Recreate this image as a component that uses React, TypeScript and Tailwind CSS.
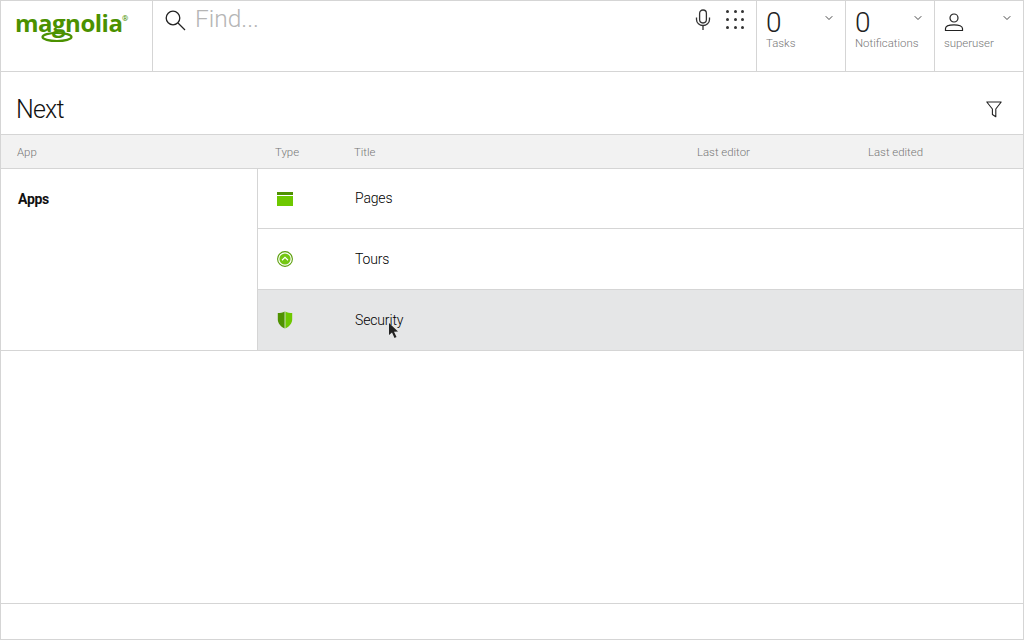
import { ChevronDown } from "lucide-react";

function StatCell({ value, label }: { value: string; label: string }) {
  return (
    <div className="relative w-[89px] shrink-0 border-l border-[#d5d5d5] pl-[9px] pt-[8px]">
      <div className="h-[28px] text-[28px] leading-[28px] font-light text-[#222]">{value}</div>
      <div className="text-[11.4px] leading-[12px] font-light text-[#777]">{label}</div>
      <ChevronDown className="absolute right-[10px] top-[11px] size-[12px] text-[#333]" strokeWidth={1.8} />
    </div>
  );
}

function AppsGrid() {
  const dots = [0, 1, 2, 3, 4, 5, 6, 7, 8];
  return (
    <div className="grid w-[18px] grid-cols-3 gap-x-[4.5px] gap-y-[5px]">
      {dots.map((d) => (
        <span key={d} className="size-[3px] rounded-full bg-[#333]" />
      ))}
    </div>
  );
}

function SearchIcon() {
  return (
    <svg width="22" height="22" viewBox="0 0 22 22" fill="none" stroke="#222" strokeWidth="1.3">
      <circle cx="8" cy="8" r="6.8" />
      <path d="M13 13 L20 20" />
    </svg>
  );
}

function MicIcon() {
  return (
    <svg width="16" height="22" viewBox="0 0 16 22" fill="none" stroke="#333" strokeWidth="1.3">
      <rect x="4.6" y="1" width="6.8" height="13" rx="3.4" />
      <path d="M1.5 8.5 V10.5 C1.5 14 4.5 16.5 8 16.5 C11.5 16.5 14.5 14 14.5 10.5 V8.5" />
      <path d="M8 16.5 V21" />
    </svg>
  );
}

function UserIcon() {
  return (
    <svg width="20" height="19" viewBox="0 0 20 19" fill="none" stroke="#222" strokeWidth="1.2">
      <circle cx="10" cy="5" r="4" />
      <path d="M1.5 17.5 V15.5 C1.5 13 5 11.8 10 11.8 C15 11.8 18.5 13 18.5 15.5 V17.5 Z" />
    </svg>
  );
}

function FilterIcon() {
  return (
    <svg width="16" height="17" viewBox="0 0 16 17" fill="none" stroke="#222" strokeWidth="1.1" strokeLinejoin="round">
      <path d="M0.8 1 H15.2 L9.8 8 V15.8 L6.4 13.5 V8 Z" />
    </svg>
  );
}

function PagesIcon() {
  return (
    <svg width="16" height="14" viewBox="0 0 16 14">
      <rect x="0" y="0" width="16" height="3" fill="#4f9200" />
      <rect x="0" y="4" width="16" height="10" fill="#6ec800" />
    </svg>
  );
}

function ToursIcon() {
  return (
    <svg width="16" height="16" viewBox="0 0 16 16">
      <circle cx="8" cy="8" r="7.4" fill="none" stroke="#5a9e08" strokeWidth="1.1" />
      <circle cx="8" cy="8" r="5.6" fill="#74c712" />
      <path d="M5 9.2 L8 6.3 L11 9.2" fill="none" stroke="#fff" strokeWidth="1.2" />
    </svg>
  );
}

function SecurityIcon() {
  return (
    <svg width="16" height="18" viewBox="0 0 16 18">
      <path d="M7.6 0.5 C6 1.6 3 2 0.8 2 V8.5 C0.8 12.5 4 15.8 7.6 17.5 Z" fill="#4f9200" />
      <path d="M8.4 0.5 C10 1.6 13 2 15.2 2 V8.5 C15.2 12.5 12 15.8 8.4 17.5 Z" fill="#6ec800" />
    </svg>
  );
}

function Logo() {
  return (
    <div className="relative h-[40px] w-[114px]">
      <span className="absolute left-0 top-[5px] text-[24px] leading-[30px] font-bold tracking-[-0.5px] text-[#4b9100] [font-family:'Open_Sans',sans-serif]">
        magnolia
      </span>
      <svg className="absolute left-[26px] top-[28px]" width="32" height="12" viewBox="0 0 32 12">
        <ellipse cx="16" cy="6" rx="14.5" ry="4" fill="none" stroke="#4b9100" strokeWidth="2.2" />
      </svg>
      <span className="absolute left-[107px] top-[12px] text-[8px] leading-[8px] text-[#4b9100]">®</span>
    </div>
  );
}

export default function App() {
  const columns = [
    { label: "Type", className: "w-[96px] pl-[17px]" },
    { label: "Title", className: "w-[343px]" },
    { label: "Last editor", className: "w-[171px]" },
    { label: "Last edited", className: "" },
  ];
  const rows = [
    { title: "Pages", icon: <PagesIcon />, className: "h-[60px] border-b border-[#d5d5d5]", text: "-mt-[1px]" },
    { title: "Tours", icon: <ToursIcon />, className: "h-[61px] border-b border-[#d5d5d5]", text: "" },
    { title: "Security", icon: <SecurityIcon />, className: "h-[60px] bg-[#e5e6e7]", text: "" },
  ];

  return (
    <div className="relative flex h-[640px] w-[1024px] flex-col overflow-hidden border border-[#d5d5d5] bg-white [font-family:Roboto,sans-serif]">
      {/* top bar */}
      <header className="flex h-[71px] shrink-0 border-b border-[#d5d5d5]">
        <div className="w-[151px] shrink-0 pl-[14px] pt-[2px]">
          <Logo />
        </div>
        <div className="flex min-w-0 flex-1 items-start border-l border-[#d5d5d5] pl-[12px] pt-[9px]">
          <SearchIcon />
          <span className="ml-[8px] -mt-[3px] text-[24.5px] leading-[24px] font-light text-[#b5b5b5]">Find...</span>
          <div className="ml-auto mr-[12px] flex items-start gap-[15px] -mt-[1px]">
            <MicIcon />
            <div className="pt-[1px]">
              <AppsGrid />
            </div>
          </div>
        </div>
        <StatCell value="0" label="Tasks" />
        <StatCell value="0" label="Notifications" />
        <div className="relative w-[89px] shrink-0 border-l border-[#d5d5d5] pl-[9px] pt-[12px]">
          <UserIcon />
          <div className="mt-[4px] text-[11.4px] leading-[14px] font-light text-[#777]">superuser</div>
          <ChevronDown className="absolute right-[10px] top-[11px] size-[12px] text-[#333]" strokeWidth={1.8} />
        </div>
      </header>

      {/* title */}
      <div className="flex h-[62px] shrink-0 items-center justify-between pl-[15px] pr-[21px] pt-[13px]">
        <h1 className="text-[25px] leading-[30px] font-light tracking-[-0.8px] text-[#111]">Next</h1>
        <FilterIcon />
      </div>

      {/* column heads */}
      <div className="flex h-[35px] shrink-0 items-center border-y border-[#d5d5d5] bg-[#f2f2f2] pt-[3px] text-[11.4px] font-light text-[#777]">
        <div className="w-[257px] pl-[16px]">App</div>
        {columns.map((c) => (
          <div key={c.label} className={c.className}>
            {c.label}
          </div>
        ))}
      </div>

      {/* app list */}
      <div className="flex h-[182px] shrink-0 border-b border-[#d5d5d5]">
        <div className="w-[257px] shrink-0 border-r border-[#d5d5d5] pl-[17px] pt-[22px] text-[14px] leading-[17px] font-bold tracking-[-0.3px] text-[#111]">
          Apps
        </div>
        <div className="flex-1">
          {rows.map((r) => (
            <div key={r.title} className={`flex items-center ${r.className}`}>
              <div className="flex w-[97px] pl-[19px]">{r.icon}</div>
              <span className={`text-[14px] tracking-[-0.15px] font-light text-[#000] ${r.text}`}>{r.title}</span>
            </div>
          ))}
        </div>
      </div>

      <div className="flex-1" />
      <div className="h-[36px] shrink-0 border-t border-[#d5d5d5]" />

      {/* mouse pointer */}
      <svg className="absolute left-[387px] top-[321px]" width="12" height="18" viewBox="0 0 12 18">
        <path d="M1 1 L1 13 L4 10.5 L6.5 16 L8.5 15 L6 9.8 L10 9.5 Z" fill="#222" />
      </svg>
    </div>
  );
}
